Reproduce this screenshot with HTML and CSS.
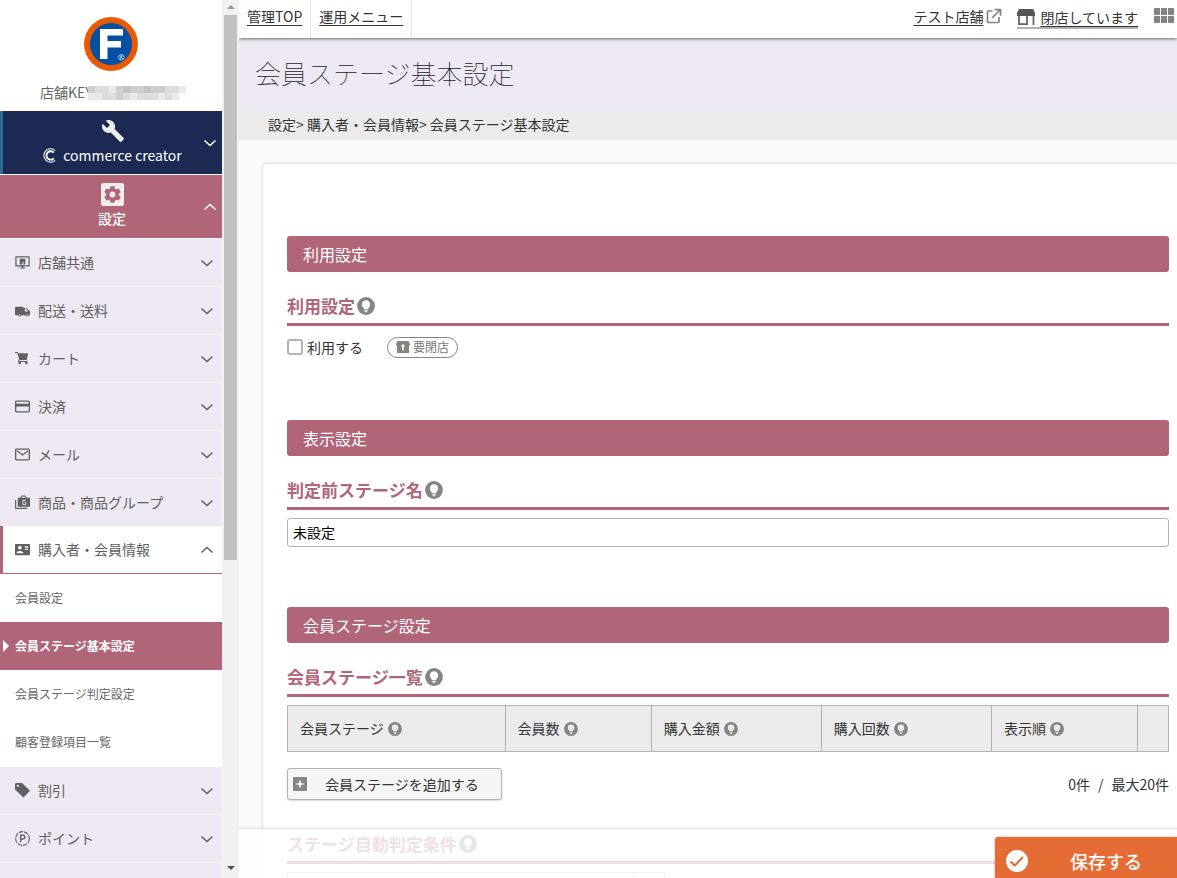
FILE: index.html
```
<!DOCTYPE html>
<html lang="ja">
<head>
<meta charset="utf-8">
<title>会員ステージ基本設定</title>
<link rel="stylesheet" href="styles.css">
</head>
<body>
<svg class="defs" aria-hidden="true">
  <symbol id="down" viewBox="0 0 14 14"><path d="M1.500 4.500L7 9.500 12.500 4.500" fill="none" stroke="currentColor" stroke-width="1.500"/></symbol>
  <symbol id="up" viewBox="0 0 14 14"><path d="M1.500 9.500L7 4.500 12.500 9.500" fill="none" stroke="currentColor" stroke-width="1.500"/></symbol>
  <symbol id="hint" viewBox="0 0 18 18"><circle cx="9" cy="9" r="8.900" fill="#848484"/><path d="M9 3.200a4.200 4.200 0 0 0-4.200 4.200c0 1.700 1 2.600 1.800 3.600V12h4.800v-1c.8-1 1.800-1.900 1.800-3.600A4.200 4.200 0 0 0 9 3.200zM6.900 12.800h4.200v.9H6.900zM7.400 14.300h3.200l-.9 1H8.300z" fill="currentColor"/></symbol>
</svg>
<div class="app">
  <aside class="side">
    <nav class="menu">
      <div class="shop">
        <svg class="logo" viewBox="0 0 54 54" role="img" aria-label="F"><circle cx="27" cy="27" r="27" fill="#ea5a04"/><circle cx="27" cy="27" r="21" fill="#0550a2"/><path d="M16 12h23v6.500H23.500V24H37v6.500H23.500V42H16z" fill="#fff"/><circle cx="37.300" cy="40.300" r="2.700" fill="none" stroke="#cfe0f2" stroke-width=".8"/><path d="M36.500 42v-3.200h1.500v1.500h-1.500m1 0l1 1.700" fill="none" stroke="#cfe0f2" stroke-width=".6"/></svg>
        <p class="key">店舗KEY<svg class="mosaic" viewBox="0 0 98 14" aria-hidden="true"><path fill="#dedcdd" d="M0 0h98v7H91v7H0z"/><path fill="#d0cdcf" d="M0 0h7v7H0zM28 0h7v7h-7zM42 0h14v7H42zM63 0h7v7h-7zM70 0h7v7h-7zM28 7h7v7h-7z"/><path fill="#c3c2c6" d="M35 0h7v7h-7zM56 0h7v7h-7z"/><path fill="#e9eaeb" d="M0 7h14v7H0zM42 7h7v7h-7zM70 7h7v7h-7zM91 0h7v7h-7zM84 7h7v7h-7zM21 0h7v7h-7z"/></svg></p>
      </div>
      <button class="big creator" type="button">
        <svg class="i24" viewBox="0 0 24 24"><path fill="#eee" d="M22.700 19l-9.100-9.100c.9-2.300.4-5-1.500-6.900-2-2-5-2.400-7.400-1.300L9 6 6 9 1.600 4.700C.4 7.100.9 10.100 2.900 12.100c1.900 1.900 4.600 2.400 6.900 1.500l9.100 9.100c.4.4 1 .4 1.400 0l2.300-2.300c.5-.4.5-1.100.1-1.400z"/></svg>
        <span class="cc"><svg viewBox="0 0 16 16"><path d="M11.500 5A4.500 4.500 0 1 0 11.500 11" fill="none" stroke="#fff" stroke-width="2"/><path d="M13 2.700A7.200 7.200 0 1 0 13 13.300" fill="none" stroke="#fff" stroke-width="1.100"/></svg>commerce creator</span>
        <svg class="chev"><use href="#down"/></svg>
      </button>
      <button class="big setting" type="button">
        <svg class="i24" viewBox="0 0 24 24"><rect x="1" y="1" width="23" height="23" rx="2" fill="#eee"/><g fill="#b06578" transform="translate(12.500 12.500)"><circle r="6.200"/><g id="t"><path d="M-2-8.300h4l.8 3.800h-5.600zM-2 8.300h4l.8-3.800h-5.600z"/></g><use href="#t" transform="rotate(60)"/><use href="#t" transform="rotate(120)"/><circle r="2.900" fill="#eee"/></g></svg>
        <span>設定</span>
        <svg class="chev"><use href="#up"/></svg>
      </button>
      <button class="item" type="button"><svg class="ico" viewBox="0 0 16 16"><path d="M1 2h14v9.500H1z" fill="none" stroke="currentColor" stroke-width="1.300"/><path fill="currentColor" d="M5 4h6v6H9V7H8v3H5zM7 11h2v2.500h2v1H5v-1h2z"/></svg><span>店舗共通</span><svg class="chev"><use href="#down"/></svg></button>
      <button class="item" type="button"><svg class="ico" viewBox="0 0 16 16"><path fill="currentColor" d="M1 4h8v1.500h3.500L16 9v4h-1.200a2 2 0 0 1-3.800 0H7a2 2 0 0 1-3.800 0H1a1 1 0 0 1-1-1V5a1 1 0 0 1 1-1z"/><path fill="#eee8f2" d="M10.500 6.500h1.600L14 9h-3.500z"/><circle cx="5" cy="12.800" r=".8" fill="#eee8f2"/><circle cx="13" cy="12.800" r=".8" fill="#eee8f2"/></svg><span>配送・送料</span><svg class="chev"><use href="#down"/></svg></button>
      <button class="item" type="button"><svg class="ico" viewBox="0 0 16 16"><path fill="currentColor" d="M0 1h3l.5 1.500H14L12.500 9.500H5l-.5 1.200h9v1H3.500V10L4.300 8.500 2.500 2H0z"/><circle cx="5" cy="12.700" r="1.400" fill="currentColor"/><circle cx="12" cy="12.700" r="1.400" fill="currentColor"/></svg><span>カート</span><svg class="chev"><use href="#down"/></svg></button>
      <button class="item" type="button"><svg class="ico" viewBox="0 0 16 16"><rect x=".7" y="2.200" width="14.600" height="11.500" rx="1" fill="none" stroke="currentColor" stroke-width="1.400"/><path fill="currentColor" d="M1 5h14v3H1z"/></svg><span>決済</span><svg class="chev"><use href="#down"/></svg></button>
      <button class="item" type="button"><svg class="ico" viewBox="0 0 16 16"><rect x=".7" y="2.200" width="14.600" height="11.500" rx="1" fill="none" stroke="currentColor" stroke-width="1.400"/><path d="M2 4l6 4.500L14 4" fill="none" stroke="currentColor" stroke-width="1.300"/></svg><span>メール</span><svg class="chev"><use href="#down"/></svg></button>
      <button class="item last" type="button"><svg class="ico" viewBox="0 0 16 16"><path d="M.7 5v9.300H13" fill="none" stroke="currentColor" stroke-width="1.300"/><path fill="currentColor" d="M3 3h3V1.500L7 .5h4l1 1V3h4v9.500H3z"/><path d="M7.200 1.700h3.600V3H7.200z" fill="#eee8f2"/><path d="M11.500 5.700h-3v4.500h3V8h-1.200" fill="none" stroke="#eee8f2"/></svg><span>商品・商品グループ</span><svg class="chev"><use href="#down"/></svg></button>
      <button class="item open" type="button"><svg class="ico" viewBox="0 0 16 16"><rect y="2" width="16" height="12" rx="1" fill="currentColor"/><circle cx="5.200" cy="6" r="1.900" fill="#fff"/><path d="M1.500 12c0-3.200 7.500-3.200 7.500 0zM10.500 4.500H14V6h-3.500zM10.500 7.200H14v1h-3.500z" fill="#fff"/></svg><span>購入者・会員情報</span><svg class="chev"><use href="#up"/></svg></button>
      <ul class="sub">
        <li><a href="#">会員設定</a></li>
        <li><a class="current" href="#">会員ステージ基本設定</a></li>
        <li><a href="#">会員ステージ判定設定</a></li>
        <li><a href="#">顧客登録項目一覧</a></li>
      </ul>
      <button class="item" type="button"><svg class="ico" viewBox="0 0 16 16"><path fill="currentColor" d="M1 0h6.500L16 8.300 9 15.500 0 7V1z"/><circle cx="3" cy="3" r="1.200" fill="#eee8f2"/></svg><span>割引</span><svg class="chev"><use href="#down"/></svg></button>
      <button class="item" type="button"><svg class="ico" viewBox="0 0 16 16"><circle cx="8" cy="8" r="7.300" fill="none" stroke="currentColor" stroke-width="1.200" stroke-dasharray="5 1"/><path d="M6 12V4.500h2.500a2 2 0 0 1 0 4H6" fill="none" stroke="currentColor" stroke-width="1.400"/></svg><span>ポイント</span><svg class="chev"><use href="#down"/></svg></button>
      <div class="item"></div>
    </nav>
    <div class="track" aria-hidden="true"><i class="arrow up"></i><i class="thumb"></i><i class="arrow down"></i></div>
  </aside>
  <main class="main">
    <header class="top">
      <a class="tab" href="#">管理TOP</a>
      <a class="tab" href="#">運用メニュー</a>
      <div class="tools">
        <a class="store" href="#">テスト店舗<svg viewBox="0 0 16 16"><path d="M6.500 3H2.500a1 1 0 0 0-1 1v9.500a1 1 0 0 0 1 1h9.500a1 1 0 0 0 1-1V9M8.500 1.700h6v6M14 2L6 10" fill="none" stroke="#848484" stroke-width="1.700"/></svg></a>
        <a class="closed" href="#"><svg viewBox="0 0 18 16"><path fill="#555" d="M2 0h14l2 4v3H0V4z"/><path d="M2 7v8.200h8V7M16.500 7v9" fill="none" stroke="#666" stroke-width="1.800"/></svg><span>閉店しています</span></a>
        <button class="apps" type="button" aria-label="アプリ"><svg viewBox="0 0 20 15"><path fill="#848484" d="M0 0h6v7H0zM7 0h6v7H7zM14 0h6v7h-6zM0 8h6v7H0zM7 8h6v7H7zM14 8h6v7h-6z"/></svg></button>
      </div>
    </header>
    <h1>会員ステージ基本設定</h1>
    <nav class="crumb">設定&gt; 購入者・会員情報&gt; 会員ステージ基本設定</nav>
    <form class="card">
      <section>
        <h2>利用設定</h2>
        <h3>利用設定<svg><use href="#hint"/></svg></h3>
        <div class="row"><label class="check"><input type="checkbox">利用する</label><span class="badge"><svg viewBox="0 0 14 12"><path fill="#848484" d="M1.500 0h11L14 3v1.500h-1V12H1V4.500H0V3z"/><path fill="#fff" d="M7 3.500a1.700 1.700 0 0 0-.7 3.200V9.500h1.400V6.700A1.700 1.700 0 0 0 7 3.500z"/></svg>要閉店</span></div>
      </section>
      <section>
        <h2>表示設定</h2>
        <h3><label for="stage">判定前ステージ名</label><svg><use href="#hint"/></svg></h3>
        <input class="text" id="stage" type="text" value="未設定">
      </section>
      <section>
        <h2>会員ステージ設定</h2>
        <h3>会員ステージ一覧<svg><use href="#hint"/></svg></h3>
        <table>
          <colgroup><col class="c1"><col class="c2"><col class="c3"><col class="c3"><col class="c2"><col></colgroup>
          <tr><th>会員ステージ<svg><use href="#hint"/></svg></th><th>会員数<svg><use href="#hint"/></svg></th><th>購入金額<svg><use href="#hint"/></svg></th><th>購入回数<svg><use href="#hint"/></svg></th><th>表示順<svg><use href="#hint"/></svg></th><th></th></tr>
        </table>
        <div class="under">
          <button class="add" type="button"><svg viewBox="0 0 14 14"><rect width="14" height="14" rx="1" fill="#848484"/><path d="M7 3.500v7M3.500 7h7" stroke="#fff" stroke-width="1.600"/></svg><span>会員ステージを追加する</span></button>
          <p class="count"><span>0件</span><span>/</span><span>最大20件</span></p>
        </div>
        <h3>ステージ自動判定条件<svg><use href="#hint"/></svg></h3>
        <select class="cond" aria-label="ステージ自動判定条件"><option></option></select>
      </section>
    </form>
    <footer class="bar"><button class="save" type="submit"><svg viewBox="0 0 22 22"><circle cx="11" cy="11" r="11" fill="#fff"/><path d="M4.500 11.500l4.300 4L17 7" fill="none" stroke="#e66c35" stroke-width="2"/></svg><span>保存する</span></button></footer>
  </main>
</div>
</body>
</html>
```

FILE: styles.css
```
* { box-sizing: border-box; }
body { margin: 0; font: 14px/20px "Noto Sans CJK JP", sans-serif; color: #333; background: #fafafa; }
h1, h2, h3, p, ul { margin: 0; padding: 0; }
button { font: inherit; border: 0; padding: 0; cursor: pointer; }
svg { flex: none; }
a { color: inherit; }
.defs { position: absolute; width: 0; height: 0; }
.app { display: flex; height: 100vh; overflow: hidden; }

.side { display: flex; flex: 0 0 239px; overflow: hidden; background: #fff; }
.menu { flex: 1; min-width: 0; }
.shop { height: 111px; padding-top: 17px; color: #666; }
.logo { display: block; width: 54px; height: 54px; margin: 0 auto; }
.key { display: flex; align-items: center; height: 20px; margin-top: 11px; padding-left: 40px; }
.mosaic { width: 98px; height: 14px; margin: 2px 0 0 -5px; }
.big { display: flex; flex-direction: column; align-items: center; gap: 2px; width: 100%; height: 63px; margin-bottom: 1px; padding: 7px 0 0 2px; color: #fff; font-weight: 500; position: relative; }
.big .chev { position: absolute; right: 5px; top: 25px; stroke-width: 2px; }
.creator { background: #1c2a53; border-left: 3px solid #2c6e95; padding: 8px 0 0; font-weight: 400; }
.setting { background: #b06578; }
.i24 { width: 24px; height: 24px; }
.cc { display: flex; align-items: center; gap: 5px; }
.cc svg { width: 15px; height: 15px; }
.chev { width: 14px; height: 14px; }
.item { display: flex; align-items: center; gap: 8px; width: 100%; height: 48px; padding: 0 8px 0 15px; background: #eee8f2; border-bottom: 1px solid #fff; color: #606060; text-align: left; }
.item span { flex: 1; padding-bottom: 1px; }
.ico { width: 15px; height: 15px; }
.last { height: 47px; border-bottom: 0; }
.open { background: #fff; border-left: 3px solid #b06578; border-bottom-color: #b06578; padding-left: 12px; }
.sub { list-style: none; padding-bottom: 1px; font-size: 12px; }
.sub a { display: flex; align-items: center; height: 48px; padding-left: 15px; color: #666; text-decoration: none; }
.sub .current { background: #b06578; color: #fff; font-weight: 700; padding-left: 3px; gap: 7px; }
.current::before { content: ""; border: 6px solid transparent; border-left: 6px solid #fff; border-right: 0; margin-right: -1px; }
.track { display: flex; flex-direction: column; align-items: center; flex: 0 0 17px; height: 100%; padding: 5px 0 8px; background: #f1f1f1; }
.thumb { width: 13px; height: 63%; margin-top: 6px; background: #c1c1c1; }
.arrow { border: 4px solid transparent; }
.arrow.up { border-top: 0; border-bottom-color: #999; }
.arrow.down { border-bottom: 0; border-top-color: #505050; margin-top: auto; }

.main { flex: 1; min-width: 0; position: relative; overflow: hidden; }
.top { display: flex; height: 38px; background: #fff; box-shadow: 0 1px 3px rgba(0, 0, 0, .55); position: relative; }
.tab { padding: 6px 8px 0; border-right: 1px solid #e6e6e6; text-underline-offset: 3px; }
.tools { display: flex; align-items: flex-start; gap: 15px; margin-left: auto; padding: 6px 3px 0 0; text-underline-offset: 3px; }
.store { display: flex; align-items: center; gap: 3px; }
.store svg { width: 16px; height: 16px; }
.closed { display: flex; align-items: center; gap: 5px; height: 23px; border-bottom: 2px solid #b3b3b3; }
.closed svg { width: 18px; height: 16px; }
.apps { display: flex; background: none; padding: 2px 0 0 1px; }
.apps svg { width: 20px; height: 15px; }
h1 { height: 71px; padding: 16px 16px 0; background: #eee8f4; font-size: 26px; line-height: 38px; font-weight: 100; color: #222; }
.crumb { height: 31px; padding: 5px 29px 0; background: #ebebeb; }
.card { margin: 24px 0 0 24px; padding: 12px 8px 40px 24px; background: #fff; border-radius: 3px 0 0 0; box-shadow: 0 0 3px rgba(0, 0, 0, .25); }
section { padding-top: 60px; }
h2 { height: 36px; padding-left: 16px; background: #b06578; border-radius: 3px; color: #fff; font-size: 16px; line-height: 36px; font-weight: 400; }
h3 { display: flex; align-items: center; gap: 2px; height: 32px; margin: 22px 0 8px; padding-bottom: 5px; border-bottom: 3px solid #b06578; color: #b06578; font-size: 17px; line-height: 24px; font-weight: 700; }
h3 svg { width: 18px; height: 18px; color: #fff; }
.row { display: flex; align-items: center; gap: 24px; height: 26px; }
.check { display: flex; align-items: center; gap: 4px; }
.check input { appearance: none; width: 16px; height: 16px; margin: 0; border: 2px solid #b3b3b3; border-radius: 3px; background: #fff; }
.badge { display: flex; align-items: center; gap: 3px; height: 21px; padding: 0 8px; border: 1px solid #848484; border-radius: 11px; color: #777; font-size: 12px; }
.badge svg { width: 14px; height: 12px; }
.text { display: block; width: 100%; height: 29px; padding: 0 5px 2px; border: 1px solid #b3b3b3; border-radius: 3px; font: inherit; color: #000; }
table { width: 100%; border-collapse: collapse; table-layout: fixed; background: #ebebeb; }
.c1 { width: 24.700%; }
.c2 { width: 16.600%; }
.c3 { width: 19.300%; }
th { height: 46px; padding: 0 12px 2px; border: 1px solid #b3b3b3; text-align: left; font-weight: 400; white-space: nowrap; }
th svg { width: 14px; height: 14px; margin-left: 4px; vertical-align: -2px; color: #ebebeb; }
.under { display: flex; align-items: center; justify-content: space-between; margin: 16px 0 32px; }
.under + h3 { margin-top: 0; }
.add { display: flex; align-items: center; gap: 18px; height: 32px; padding: 0 22px 0 5px; border: 1px solid #b3b3b3; border-radius: 3px; background: #f5f5f5; color: #333; box-shadow: 0 1px 2px rgba(0, 0, 0, .15); }
.add svg { width: 14px; height: 14px; }
.count { display: flex; gap: 8px; }
.cond { display: block; appearance: none; width: 378px; max-width: 100%; height: 29px; border: 1px solid #b3b3b3; border-radius: 3px; background: linear-gradient(#b3b3b3, #b3b3b3) right 30px top / 1px 100% no-repeat #fff; }
.bar { position: absolute; left: 0; right: 0; bottom: 0; display: flex; justify-content: flex-end; align-items: flex-end; height: 50px; background: rgba(255, 255, 255, .8); border-top: 1px solid #e6e6e6; box-shadow: 0 -1px 2px rgba(0, 0, 0, .06); }
.save { display: flex; align-items: center; gap: 42px; height: 41px; padding: 7px 35px 0 11px; border-radius: 3px 0 0 0; background: #e66c35; color: #fff; font-size: 18px; font-weight: 500; box-shadow: 0 0 3px rgba(0, 0, 0, .3); }
.save svg { width: 22px; height: 22px; }
```
